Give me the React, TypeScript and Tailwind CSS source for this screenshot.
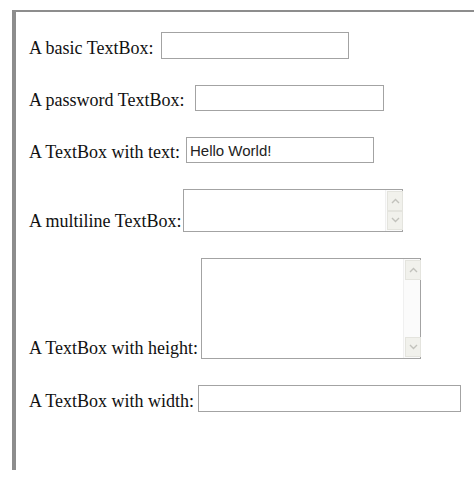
import React from "react";

const labelCls = "shrink-0 whitespace-nowrap pb-[2px] leading-none";
const boxCls = "border border-[#a3a3a3] bg-white";

function ScrollButton({ dir }: { dir: "up" | "down" }) {
  return (
    <div className="flex h-[20px] w-[16px] items-center justify-center border border-[#e4e4de] bg-[#f1f1ec]">
      <svg width="9" height="6" viewBox="0 0 9 6" fill="none">
        <path
          d={dir === "up" ? "M1 5 L4.5 1.5 L8 5" : "M1 1 L4.5 4.5 L8 1"}
          stroke="#c2c2bc"
          strokeWidth="1.4"
        />
      </svg>
    </div>
  );
}

function TextArea({ width, height }: { width: number; height: number }) {
  return (
    <div className={`flex ${boxCls}`} style={{ width, height }}>
      <textarea className="min-w-0 flex-1 resize-none bg-white outline-none" />
      <div className="flex w-[17px] flex-col justify-between border-l border-[#f0f0f0] bg-[#fbfbfb] p-px">
        <ScrollButton dir="up" />
        <ScrollButton dir="down" />
      </div>
    </div>
  );
}

export default function App() {
  return (
    <div className="h-[491px] w-[474px] bg-white pl-[12px] pt-[10px] font-['Liberation_Serif',serif] text-[18px] text-[#111]">
      <div className="h-[460px] border-l-[4px] border-t-[2px] border-[#8d8d8d] pl-[13px] pt-[20px]">
        <div className="flex flex-col gap-[26px]">
          <div className="flex items-end">
            <span className={`${labelCls} w-[132px]`}>A basic TextBox:</span>
            <input type="text" className={`h-[27px] w-[188px] ${boxCls} outline-none`} />
          </div>
          <div className="flex items-end">
            <span className={`${labelCls} w-[166px]`}>A password TextBox:</span>
            <input type="password" className={`h-[26px] w-[189px] ${boxCls} outline-none`} />
          </div>
          <div className="flex items-end">
            <span className={`${labelCls} w-[157px]`}>A TextBox with text:</span>
            <input
              type="text"
              defaultValue="Hello World!"
              className={`h-[26px] w-[188px] ${boxCls} pl-[3px] font-['Liberation_Sans',Arial,sans-serif] text-[15px] text-[#222] outline-none`}
            />
          </div>
          <div className="flex items-end">
            <span className={`${labelCls} w-[154px]`}>A multiline TextBox:</span>
            <TextArea width={220} height={43} />
          </div>
          <div className="flex items-end">
            <span className={`${labelCls} w-[172px]`}>A TextBox with height:</span>
            <TextArea width={220} height={101} />
          </div>
          <div className="flex items-end">
            <span className={`${labelCls} w-[169px]`}>A TextBox with width:</span>
            <input type="text" className={`h-[27px] w-[263px] ${boxCls} outline-none`} />
          </div>
        </div>
      </div>
    </div>
  );
}
